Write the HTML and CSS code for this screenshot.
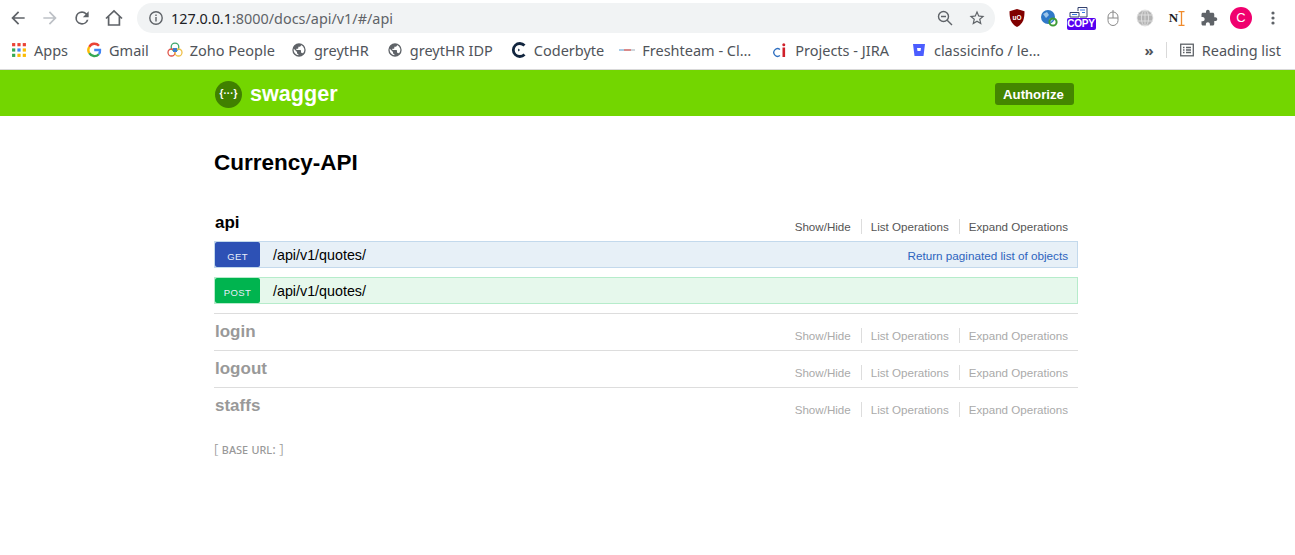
FILE: index.html
```html
<!DOCTYPE html>
<html lang="en">
  <head>
    <meta charset="UTF-8" />
    <meta name="viewport" content="width=device-width, initial-scale=1.0" />
    <title>Currency-API</title>
    <link rel="stylesheet" href="styles.css">
  </head>
  <body>
    <div class="toolbar">
      <div class="slot"><svg width="20" height="20" viewBox="0 0 24 24" fill="#5f6368"><path d="M20 11H7.830l5.590-5.590L12 4l-8 8 8 8 1.410-1.410L7.830 13H20v-2z"/></svg></div>
      <div class="slot"><svg width="20" height="20" viewBox="0 0 24 24" fill="#bdc1c6"><path d="M4 11h12.170l-5.590-5.590L12 4l8 8-8 8-1.410-1.410L16.170 13H4v-2z"/></svg></div>
      <div class="slot"><svg width="20" height="20" viewBox="0 0 24 24" fill="#5f6368"><path d="M17.650 6.350A7.960 7.960 0 0 0 12 4a8 8 0 1 0 7.730 10h-2.080A6 6 0 1 1 12 6c1.660 0 3.140.69 4.220 1.780L13 11h7V4l-2.350 2.350z"/></svg></div>
      <div class="slot"><svg width="20" height="20" viewBox="0 0 20 20" fill="none" stroke="#5f6368" stroke-width="1.700"><path d="M2 10.500 10 3l8 7.500M4.600 8.500V17h10.800V8.500"/></svg></div>
      <div class="address">
        <svg width="16" height="16" viewBox="0 0 16 16" fill="none" stroke="#5f6368" stroke-width="1.400"><circle cx="8" cy="8" r="6.200"/><path d="M8 7v4.400M8 4.400v1.500"/></svg>
        <div class="url"><span class="host">127.0.0.1</span>:8000/docs/api/v1/#/api</div>
        <svg class="addr-zoom" width="18" height="18" viewBox="0 0 18 18" fill="none" stroke="#5f6368" stroke-width="1.400"><circle cx="7.500" cy="7.500" r="5"/><path d="M11.200 11.200 16 16M5 7.500h5"/></svg>
        <svg width="18" height="18" viewBox="0 0 24 24" fill="#5f6368"><path d="M22 9.240l-7.190-.62L12 2 9.190 8.630 2 9.240l5.460 4.730L5.820 21 12 17.270 18.180 21l-1.630-7.030L22 9.240zM12 15.400l-3.760 2.270 1-4.280-3.320-2.880 4.380-.38L12 6.100l1.710 4.040 4.380.38-3.320 2.880 1 4.280L12 15.400z"/></svg>
      </div>
      <div class="extensions">
        <div class="slot"><svg width="16" height="18" viewBox="0 0 16 18"><path d="M8 0 15.500 2.200C15.500 9 14.500 14.500 8 18 1.500 14.500.5 9 .5 2.200z" fill="#800000"/><text x="8" y="10.500" class="ext-text" fill="#fff" font-size="6.500" text-anchor="middle">uO</text></svg></div>
        <div class="slot"><svg width="18" height="18" viewBox="0 0 18 18"><circle cx="8" cy="8" r="7" fill="#2f78c8"/><path d="M3 5 7 3l2 3-3 3zM9 10l3-1 1 2-3 3z" fill="#9cc4ea"/><circle cx="13" cy="13" r="3.600" fill="none" stroke="#3f9b35" stroke-width="2"/></svg></div>
        <div class="slot">
          <div class="copy-ext">
            <svg width="24" height="11" viewBox="0 0 24 11" fill="none" stroke="#33406e" stroke-width="1"><path d="M1 10V5.500h9V10zM9 4V.5h9V10h-7"/><path d="M3 7.500h5M11 3h5M13 5.500h3" stroke="#3a7be0"/></svg>
            <span class="copy-badge">COPY</span>
          </div>
        </div>
        <div class="slot"><svg width="12" height="18" viewBox="0 0 12 18" fill="none" stroke="#8a8a8a" stroke-width="1"><rect x="1" y="3" width="10" height="13.500" rx="5"/><path d="M1 9h10M6 1v8"/></svg></div>
        <div class="slot"><svg width="18" height="18" viewBox="0 0 18 18" fill="#b4b4b4" stroke="#e4e4e4" stroke-width=".8"><circle cx="9" cy="9" r="8"/><ellipse cx="9" cy="9" rx="3.600" ry="8" fill="none"/><path d="M1 6h16M1 12h16M9 1v16" fill="none"/></svg></div>
        <div class="slot">
          <div class="notion-ext"><span class="notion-n">N</span><svg width="7" height="15" viewBox="0 0 7 15" fill="none" stroke="#ef8a2c" stroke-width="1.300"><path d="M.5.700h6M.5 14.300h6M3.500.700v13.600"/></svg></div>
        </div>
        <div class="slot"><svg width="18" height="18" viewBox="0 0 24 24" fill="#5f6368"><path d="M20.500 11H19V7c0-1.100-.9-2-2-2h-4V3.500C13 2.120 11.880 1 10.500 1S8 2.120 8 3.500V5H4c-1.100 0-1.990.9-1.990 2v3.800H3.500c1.490 0 2.700 1.210 2.700 2.700s-1.210 2.700-2.700 2.700H2V20c0 1.100.9 2 2 2h3.800v-1.500c0-1.490 1.210-2.700 2.700-2.700 1.490 0 2.700 1.210 2.700 2.700V22H17c1.100 0 2-.9 2-2v-4h1.500c1.380 0 2.500-1.120 2.500-2.500S21.880 11 20.500 11z"/></svg></div>
        <div class="slot"><div class="avatar">C</div></div>
        <div class="slot"><svg width="4" height="14" viewBox="0 0 4 14" fill="#5f6368"><circle cx="2" cy="2" r="1.600"/><circle cx="2" cy="7" r="1.600"/><circle cx="2" cy="12" r="1.600"/></svg></div>
      </div>
    </div>

    <div class="bookmarks">
      <div class="mark">
        <svg width="16" height="16" viewBox="0 0 15 15">
          <rect x="1" y="1" width="3" height="3" fill="#ea4335"/><rect x="6" y="1" width="3" height="3" fill="#ea4335"/><rect x="11" y="1" width="3" height="3" fill="#ea4335"/>
          <rect x="1" y="6" width="3" height="3" fill="#34a853"/><rect x="6" y="6" width="3" height="3" fill="#4285f4"/><rect x="11" y="6" width="3" height="3" fill="#fbbc05"/>
          <rect x="1" y="11" width="3" height="3" fill="#34a853"/><rect x="6" y="11" width="3" height="3" fill="#fbbc05"/><rect x="11" y="11" width="3" height="3" fill="#fbbc05"/>
        </svg>
        Apps
      </div>
      <div class="mark">
        <svg width="16" height="16" viewBox="0 0 16 16" fill="none" stroke-width="2.400"><path d="M13 3.800A6 6 0 0 0 3.300 4.800" stroke="#ea4335"/><path d="M3.300 4.800a6 6 0 0 0 0 6.400" stroke="#fbbc05"/><path d="M3.300 11.200a6 6 0 0 0 9.500 1" stroke="#34a853"/><path d="M12.800 12.200c1-1 1.400-2.400 1.200-4.200H8.200" stroke="#4285f4"/></svg>
        Gmail
      </div>
      <div class="mark">
        <svg width="16" height="16" viewBox="0 0 16 16" fill="none" stroke-width="1.300"><circle cx="8" cy="5" r="3.800" stroke="#3fa66b"/><circle cx="4.500" cy="10.500" r="3.500" stroke="#e0564a"/><circle cx="11.500" cy="10.500" r="3.500" stroke="#efc04a"/><path d="M6 6h4v4H6z" fill="#3f7fd0" stroke="none"/></svg>
        Zoho People
      </div>
      <div class="mark">
        <svg width="16" height="16" viewBox="0 0 24 24" fill="#5f6368"><path d="M12 2a10 10 0 1 0 0 20 10 10 0 0 0 0-20zm-1 17.930A8 8 0 0 1 4.210 10.200L9 15v1c0 1.100.9 2 2 2v1.930zm6.900-2.540A2 2 0 0 0 16 16h-1v-3c0-.55-.45-1-1-1H8v-2h2c.55 0 1-.45 1-1V7h2c1.100 0 2-.9 2-2v-.41a8 8 0 0 1 2.900 12.800z"/></svg>
        greytHR
      </div>
      <div class="mark">
        <svg width="16" height="16" viewBox="0 0 24 24" fill="#5f6368"><path d="M12 2a10 10 0 1 0 0 20 10 10 0 0 0 0-20zm-1 17.930A8 8 0 0 1 4.210 10.200L9 15v1c0 1.100.9 2 2 2v1.930zm6.900-2.540A2 2 0 0 0 16 16h-1v-3c0-.55-.45-1-1-1H8v-2h2c.55 0 1-.45 1-1V7h2c1.100 0 2-.9 2-2v-.41a8 8 0 0 1 2.900 12.800z"/></svg>
        greytHR IDP
      </div>
      <div class="mark">
        <svg width="16" height="16" viewBox="0 0 16 16" fill="none"><path d="M13.500 3.500a6.500 6.500 0 1 0 0 9" stroke="#12263f" stroke-width="2.800"/><path d="M7 7l1.500 1L7 9" stroke="#12263f" stroke-width="1"/></svg>
        Coderbyte
      </div>
      <div class="mark">
        <svg width="16" height="16" viewBox="0 0 16 16"><rect y="7" width="6" height="2" fill="#a8cbe6"/><rect x="5" y="7" width="7" height="2" fill="#d98a8a"/><rect x="12" y="7" width="4" height="2" fill="#cfd6dc"/></svg>
        Freshteam - Cl…
      </div>
      <div class="mark">
        <svg width="16" height="16" viewBox="0 0 16 16"><path d="M8 7.500a3.800 3.800 0 1 0 0 6" fill="none" stroke="#2f6fc0" stroke-width="1.300"/><rect x="10.500" y="5.500" width="2.600" height="9.500" fill="#d0202a"/><circle cx="11.800" cy="2.800" r="1.500" fill="#d0202a"/></svg>
        Projects - JIRA
      </div>
      <div class="mark">
        <svg width="16" height="16" viewBox="0 0 16 16"><path d="M2 2h12l-1.500 12h-9z" fill="#4b5dff"/><path d="M6 6h4l-.5 3h-3z" fill="#fff"/></svg>
        classicinfo / le…
      </div>
      <div class="more">»</div>
      <div class="reading">
        <svg width="16" height="16" viewBox="0 0 16 16" fill="none" stroke="#5f6368" stroke-width="1.300"><rect x="1.700" y="2.200" width="12.600" height="11.600"/><path d="M4 5.500h1.500M7 5.500h5M4 8h1.500M7 8h5M4 10.500h1.500M7 10.500h5"/></svg>
        Reading list
      </div>
    </div>

    <header class="swagger-bar">
      <div class="wrap bar-inner">
        <div class="logo-mark">{···}</div>
        <div class="logo-text">swagger</div>
        <button class="authorize">Authorize</button>
      </div>
    </header>

    <main class="wrap">
      <h1 class="api-title">Currency-API</h1>

      <section class="resource first">
        <div class="resource-head">
          <h2>api</h2>
          <ul class="actions">
            <li>Show/Hide</li>
            <li>List Operations</li>
            <li>Expand Operations</li>
          </ul>
        </div>
        <div class="op op-get">
          <span class="method">GET</span>
          <span class="path">/api/v1/quotes/</span>
          <span class="summary">Return paginated list of objects</span>
        </div>
        <div class="op op-post">
          <span class="method">POST</span>
          <span class="path">/api/v1/quotes/</span>
        </div>
      </section>

      <section class="resource muted">
        <div class="resource-head">
          <h2>login</h2>
          <ul class="actions">
            <li>Show/Hide</li>
            <li>List Operations</li>
            <li>Expand Operations</li>
          </ul>
        </div>
      </section>

      <section class="resource muted">
        <div class="resource-head">
          <h2>logout</h2>
          <ul class="actions">
            <li>Show/Hide</li>
            <li>List Operations</li>
            <li>Expand Operations</li>
          </ul>
        </div>
      </section>

      <section class="resource muted">
        <div class="resource-head">
          <h2>staffs</h2>
          <ul class="actions">
            <li>Show/Hide</li>
            <li>List Operations</li>
            <li>Expand Operations</li>
          </ul>
        </div>
      </section>

      <p class="base-url"><span class="bracket">[</span> base url: <span class="bracket">]</span></p>
    </main>
  </body>
</html>
```

FILE: styles.css
```css
* {
  box-sizing: border-box;
}
body {
  margin: 0;
  background: white;
  font-family: "Liberation Sans", Arial, sans-serif;
  overflow: hidden;
}

/* browser chrome */
.toolbar {
  display: flex;
  align-items: center;
  height: 36px;
  padding-left: 2px;
}
.slot {
  width: 32px;
  height: 32px;
  display: flex;
  align-items: center;
  justify-content: center;
  flex: none;
}
.address {
  display: flex;
  align-items: center;
  width: 858px;
  height: 30px;
  margin-left: 7px;
  padding: 0 9px 0 11px;
  background: rgb(241, 243, 244);
  border-radius: 15px;
  gap: 14px;
  flex: none;
}
.url {
  flex: 1;
  margin-left: -7px;
  font-family: "Noto Sans", sans-serif;
  font-size: 14.4px;
  color: rgb(95, 99, 104);
}
.host {
  color: rgb(32, 33, 36);
}
.extensions {
  display: flex;
  margin-left: 6px;
}
.ext-text {
  font-family: "Liberation Sans", sans-serif;
  font-weight: bold;
}
.copy-ext {
  display: flex;
  flex-direction: column;
  align-items: center;
}
.copy-badge {
  width: 29px;
  height: 12px;
  border-radius: 2px;
  background: rgb(85, 0, 240);
  color: white;
  font-family: "Liberation Sans", sans-serif;
  font-size: 10px;
  font-weight: bold;
  letter-spacing: -.2px;
  line-height: 12px;
  text-align: center;
  white-space: nowrap;
}
.notion-ext {
  display: flex;
  align-items: center;
}
.notion-n {
  font-family: "Liberation Serif", serif;
  font-size: 13px;
  font-weight: bold;
  color: rgb(30, 30, 30);
}
.avatar {
  width: 22px;
  height: 22px;
  border-radius: 50%;
  background: rgb(240, 0, 110);
  color: white;
  font-family: "Liberation Sans", sans-serif;
  font-size: 13px;
  line-height: 22px;
  text-align: center;
}

.bookmarks {
  display: flex;
  align-items: center;
  height: 34px;
  padding: 0 0 5px 11px;
  border-bottom: 1px solid rgb(217, 217, 217);
  font-family: "Noto Sans", sans-serif;
  font-size: 14.5px;
  color: rgb(80, 84, 90);
  white-space: nowrap;
}
.mark {
  display: flex;
  align-items: center;
  gap: 7px;
  margin-right: 18px;
}
/* the bookmark text runs a bit different from chrome's own font */
.mark:nth-child(3) {
  margin-right: 16px;
}
.mark:nth-child(6) {
  margin-right: 15px;
}
.mark:nth-child(7) {
  margin-right: 21px;
}
.mark:nth-child(8) {
  margin-right: 22px;
}
.more {
  margin-left: auto;
  font-size: 15px;
  font-weight: bold;
  padding-right: 12px;
  border-right: 1px solid rgb(217, 217, 217);
  line-height: 16px;
}
.reading {
  display: flex;
  align-items: center;
  gap: 7px;
  margin-left: 12px;
  padding-right: 14px;
}

/* swagger page */
.wrap {
  width: 864px;
  margin-left: 214px;
}
.swagger-bar {
  height: 46px;
  background: rgb(115, 214, 0);
}
.bar-inner {
  display: flex;
  align-items: center;
  height: 46px;
  padding: 2px 4px 0 1px;
}
.logo-mark {
  width: 27px;
  height: 27px;
  border-radius: 50%;
  background: rgb(64, 128, 0);
  color: white;
  font-size: 10px;
  font-weight: bold;
  line-height: 26px;
  text-align: center;
}
.logo-text {
  margin-left: 8px;
  color: white;
  font-size: 21.6px;
  font-weight: bold;
}
.authorize {
  margin-left: auto;
  width: 79px;
  height: 22px;
  padding: 0 2px 0 0;
  background: rgb(68, 134, 0);
  border: none;
  border-radius: 3px;
  color: white;
  font-family: inherit;
  font-size: 13.2px;
  font-weight: bold;
}
.api-title {
  margin: 0;
  padding-top: 33px;
  font-size: 22.5px;
  line-height: 28px;
  color: black;
}
.resource {
  border-top: 1px solid rgb(221, 221, 221);
}
.resource.first {
  margin-top: 32px;
  border-top: none;
  padding-bottom: 9px;
}
.resource-head {
  display: flex;
  align-items: center;
  justify-content: space-between;
  height: 36px;
}
.resource.first .resource-head {
  height: 32px;
}
.resource h2 {
  margin: 0 0 1px 1px;
  font-size: 17px;
  color: black;
}
.resource.first h2 {
  margin-bottom: 5px;
}
.muted h2 {
  color: rgb(153, 153, 153);
}
.actions {
  display: flex;
  margin: 6px 0 0;
  padding: 0;
  list-style: none;
  font-size: 11.6px;
  color: rgb(85, 85, 85);
}
.resource.first .actions {
  margin-top: 2px;
}
.muted .actions {
  color: rgb(170, 170, 170);
}
.actions li {
  padding: 0 10px 0 9px;
  border-left: 1px solid rgb(221, 221, 221);
  line-height: 15px;
}
.actions li:first-child {
  border-left: none;
}
.op {
  display: flex;
  align-items: center;
  height: 27px;
  padding: 0 9px 0 0;
  border: 1px solid;
  font-size: 14.3px;
  color: black;
}
.op-get {
  background: rgb(231, 240, 247);
  border-color: rgb(195, 217, 236);
}
.op-post {
  margin-top: 9px;
  background: rgb(230, 248, 236);
  border-color: rgb(182, 236, 203);
}
.method {
  width: 45px;
  height: 25px;
  border-radius: 2px;
  color: rgb(232, 238, 250);
  font-size: 9.5px;
  letter-spacing: .4px;
  line-height: 30px;
  text-align: center;
}
.op-get .method {
  background: rgb(45, 81, 181);
}
.op-post .method {
  background: rgb(0, 180, 79);
}
.path {
  margin-left: 13px;
}
.summary {
  margin-left: auto;
  padding-top: 2px;
  font-size: 11.7px;
  color: rgb(45, 100, 190);
}
.base-url {
  margin: 12px 0 0;
  font-family: "Noto Sans", sans-serif;
  font-size: 13.4px;
  font-variant: small-caps;
  color: rgb(153, 153, 153);
}
.bracket {
  font-size: 17px;
  font-weight: 300;
}
```
